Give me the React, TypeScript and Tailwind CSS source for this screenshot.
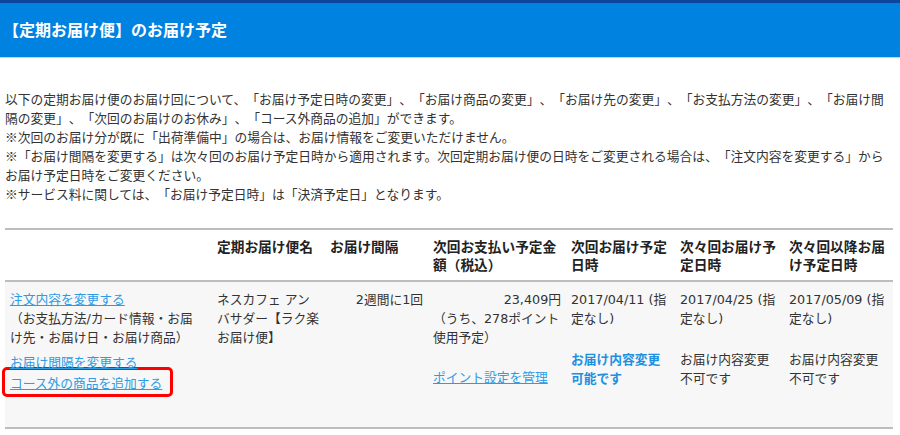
import React from "react";

const cjk = { fontFamily: '"Noto Sans CJK JP", sans-serif' };
const mixed = { fontFamily: '"DejaVu Sans", "Noto Sans CJK JP", sans-serif' };

export default function App() {
  return (
    <div className="w-[900px] h-[435px] bg-white text-[#333] overflow-hidden [text-spacing-trim:space-all]" style={cjk}>
      <div className="h-[58px] border-t-[3px] border-[#0c469c] bg-[#0082e0] border-b border-b-[#d3d3d3] flex items-center pl-[3px] pb-[2px]">
        <h1 className="text-white font-bold text-[16px] leading-[20px]">【定期お届け便】のお届け予定</h1>
      </div>

      <div className="mt-[31px] px-[5px] text-[12.75px] leading-[19px]">
        <p>
          以下の定期お届け便のお届け回について、「お届け予定日時の変更」、「お届け商品の変更」、「お届け先の変更」、「お支払方法の変更」、「お届け間隔の変更」、「次回のお届けのお休み」、「コース外商品の追加」ができます。
        </p>
        <p>※次回のお届け分が既に「出荷準備中」の場合は、お届け情報をご変更いただけません。</p>
        <p>
          ※「お届け間隔を変更する」は次々回のお届け予定日時から適用されます。次回定期お届け便の日時をご変更される場合は、「注文内容を変更する」からお届け予定日時をご変更ください。
        </p>
        <p>※サービス料に関しては、「お届け予定日時」は「決済予定日」となります。</p>
      </div>

      <table
        className="mt-[25px] ml-[5px] w-[888px] table-fixed border-collapse border-t-2 border-[#bdbdbd]"
        style={mixed}
      >
        <colgroup>
          <col className="w-[207px]" />
          <col className="w-[113px]" />
          <col className="w-[103px]" />
          <col className="w-[138px]" />
          <col className="w-[109px]" />
          <col className="w-[109px]" />
          <col className="w-[109px]" />
        </colgroup>
        <thead>
          <tr className="h-[52px] border-b-2 border-[#bdbdbd] bg-white">
            {["", "定期お届け便名", "お届け間隔", "次回お支払い予定金額（税込）", "次回お届け予定日時", "次々回お届け予定日時", "次々回以降お届け予定日時"].map((h, i) => (
              <th
                key={i}
                className="align-top text-left font-bold text-[13.7px] leading-[17.5px] px-[5px] pt-[8px] text-[#222]"
                style={cjk}
              >
                {h}
              </th>
            ))}
          </tr>
        </thead>
        <tbody>
          <tr className="h-[147px] border-b-2 border-[#bdbdbd] bg-[#f7f7f7] text-[12.75px] leading-[19px]">
            <td className="align-top pl-[5px] pr-[10px] pt-[8px]">
              <a href="#" className="text-[#2f9be3] underline block w-fit">注文内容を変更する</a>
              <p>（お支払方法/カード情報・お届け先・お届け日・お届け商品）</p>
              <a href="#" className="mt-[5px] text-[#2f9be3] underline block w-fit" style={cjk}>お届け間隔を変更する</a>
              <div className="-mt-[4px] -ml-[8px] w-[171px] border-[3px] border-[#ff0000] rounded-[5px] pl-[5px] py-[2.5px]">
                <a href="#" className="text-[#2f9be3] underline block w-fit" style={cjk}>コース外の商品を追加する</a>
              </div>
            </td>
            <td className="align-top px-[5px] pt-[8px]">ネスカフェ アンバサダー【ラク楽お届け便】</td>
            <td className="align-top px-[5px] pt-[8px] text-right">2週間に1回</td>
            <td className="align-top px-[5px] pt-[8px]">
              <div className="text-right">23,409円</div>
              <p>（うち、278ポイント使用予定）</p>
              <a href="#" className="mt-[20px] text-[#2f9be3] underline block w-fit" style={cjk}>ポイント設定を管理</a>
            </td>
            <td className="align-top px-[5px] pt-[8px]">
              <div>2017/04/11 (指定なし)</div>
              <div className="mt-[21px] font-bold text-[#1f8fe0]" style={cjk}>お届け内容変更可能です</div>
            </td>
            <td className="align-top px-[5px] pt-[8px]">
              <div>2017/04/25 (指定なし)</div>
              <div className="mt-[21px]" style={cjk}>お届け内容変更不可です</div>
            </td>
            <td className="align-top px-[5px] pt-[8px]">
              <div>2017/05/09 (指定なし)</div>
              <div className="mt-[21px]" style={cjk}>お届け内容変更不可です</div>
            </td>
          </tr>
        </tbody>
      </table>
    </div>
  );
}
